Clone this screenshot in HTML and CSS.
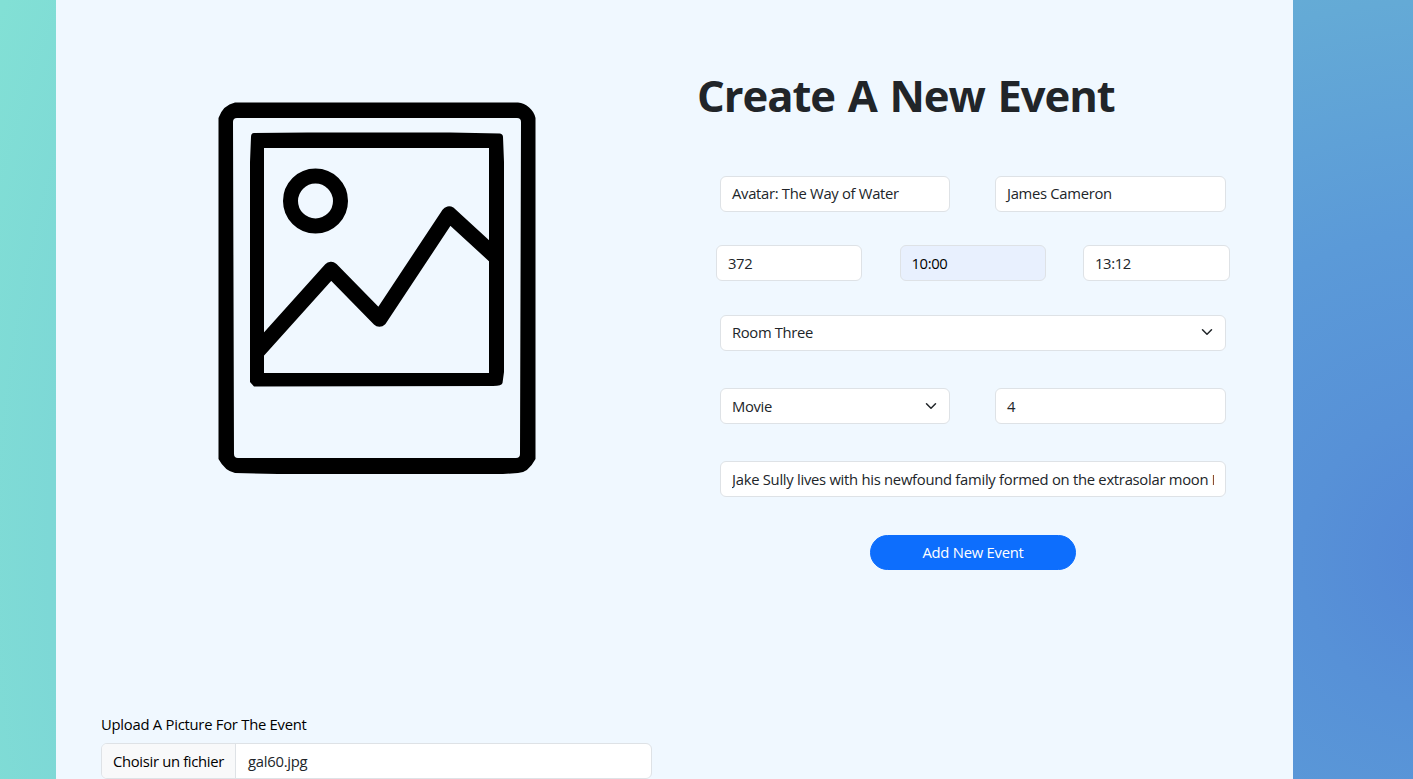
FILE: index.html
```html
<!DOCTYPE html>
<html lang="en">
<head>
<meta charset="utf-8">
<title>Create A New Event</title>
<link rel="stylesheet" href="styles.css">
</head>
<body>
<main class="card">
  <section class="media">
    <svg class="preview" viewBox="0 0 318 373" fill="none" stroke="#000" stroke-width="15">
      <path fill="#000" fill-rule="evenodd" stroke="none" d="M17 .5H300C308 1 316 8 317.500 16V357Q310 371 300 371L285 372H60L17 371Q7 369 .5 357V16Q5 3 17 .5ZM19 16Q15 16 15 20L16 352Q16 356 20 356H298Q302 356 302 352L303 20Q303 16 299 16Z"/>
      <path fill="#000" fill-rule="evenodd" stroke="none" d="M36 31L90 30.500H232L282 31.500Q285 32 285 35L286 60V270L284.500 281Q284 284 275 284L36 284.500L32 280V60L33 35Q33 31 36 31ZM46 46V271H271V46Z"/>
      <circle cx="97.500" cy="99" r="25"/>
      <path stroke-linejoin="round" stroke-width="15.500" d="M39 249.700L113 167.500L161.500 217L231 112L280 157"/>
    </svg>
    <div class="upload">
      <label class="upload-label" for="picture">Upload A Picture For The Event</label>
      <div class="file" id="picture"><span class="file-button">Choisir un fichier</span><span class="file-name">gal60.jpg</span></div>
    </div>
  </section>
  <section class="details">
    <h1 class="title">Create A New Event</h1>
    <form class="form">
      <div class="row halves people">
        <div class="field"><span>Avatar: The Way of Water</span></div>
        <div class="field"><span>James Cameron</span></div>
      </div>
      <div class="row thirds">
        <div class="field"><span>372</span></div>
        <div class="field autofill"><span>10:00</span></div>
        <div class="field"><span>13:12</span></div>
      </div>
      <div class="row room">
        <div class="field select"><span>Room Three</span><svg class="chevron" viewBox="0 0 16 16"><path d="m2 5 6 6 6-6"/></svg></div>
      </div>
      <div class="row halves kind">
        <div class="field select"><span>Movie</span><svg class="chevron" viewBox="0 0 16 16"><path d="m2 5 6 6 6-6"/></svg></div>
        <div class="field"><span>4</span></div>
      </div>
      <div class="row summary">
        <div class="field"><span class="clip">Jake Sully lives with his newfound family formed on the extrasolar moon Pandora.</span></div>
      </div>
      <button class="submit" type="button">Add New Event</button>
    </form>
  </section>
</main>
</body>
</html>
```
FILE: styles.css
```css
* { box-sizing: border-box; }
body {
  margin: 0;
  height: 779px;
  overflow: hidden;
  padding: 0 120px 0 56px;
  font-family: "Open Sans", "Noto Sans", sans-serif;
  font-size: 14.8px;
  letter-spacing: -0.35px;
  line-height: 22px;
  color: #212529;
  background: radial-gradient(circle at 1450px 560px, #5387d6 0, #5791d7 150px, #5b9ad8 330px, #64aad6 560px, #7dd8d6 1400px, #82e0d5 1550px);
}
.card {
  height: 779px;
  padding: 0 63px 0 45px;
  display: grid;
  grid-template-columns: 551px 1fr;
  gap: 45px;
  background: #f0f8ff;
}
.media {
  display: flex;
  flex-direction: column;
  justify-content: space-between;
  padding-top: 102px;
}
.preview { width: 318px; height: 373px; margin-left: 117px; display: block; }
.upload-label { display: block; color: #000; margin-bottom: 8px; letter-spacing: -0.25px; }
.file {
  display: flex;
  height: 36px;
  border: 1px solid #dee2e6;
  border-radius: 6px;
  background: #fff;
  line-height: 35px;
  overflow: hidden;
}
.file-button {
  width: 134px;
  padding-left: 11px;
  color: #000;
  background: #f8f9fa;
  border-right: 1px solid #dee2e6;
  white-space: nowrap;
  letter-spacing: -0.32px;
}
.file-name { padding-left: 12px; letter-spacing: -0.25px; }
.title {
  margin: 0;
  padding-top: 65px;
  height: 176px;
  font-size: 43.6px;
  line-height: 60px;
  font-weight: 700;
  letter-spacing: -1.05px;
  word-spacing: 2.4px;
  white-space: nowrap;
}
.form { display: flex; flex-direction: column; padding: 0 4px 0 19px; }
.row { display: grid; padding: 0 0 0 4px; margin-bottom: 33px; }
.halves { grid-template-columns: 230px 231px; gap: 45px; }
.thirds { grid-template-columns: 146px 146px 147px; justify-content: space-between; padding: 0; margin: 0 -4px 34px 0; }
.room, .kind { margin-bottom: 37px; }
.summary { margin-bottom: 38px; }
.field {
  display: flex;
  min-width: 0;
  height: 36px;
  padding: 0 11px;
  border: 1px solid #dee2e6;
  border-radius: 6px;
  background: #fff;
  line-height: 34px;
  white-space: nowrap;
}
.people .field, .room .field { line-height: 32px; }
.people .field { letter-spacing: -0.3px; }
.room .field { padding-bottom: 2px; }
.autofill { background: #e8f0fe; color: #000; }
.select { justify-content: space-between; align-items: center; }
.clip { overflow: hidden; letter-spacing: -0.275px; }
.chevron { width: 12px; height: 12px; margin-right: 1px; fill: none; stroke: #212529; stroke-width: 2; stroke-linecap: round; stroke-linejoin: round; }
.submit {
  width: 206px;
  height: 35px;
  margin-left: 154px;
  padding: 0 0 2px;
  border: 1px solid #0d6efd;
  border-radius: 18px;
  background: #0d6efd;
  color: #fff;
  font: inherit;
  letter-spacing: -0.25px;
}
```
